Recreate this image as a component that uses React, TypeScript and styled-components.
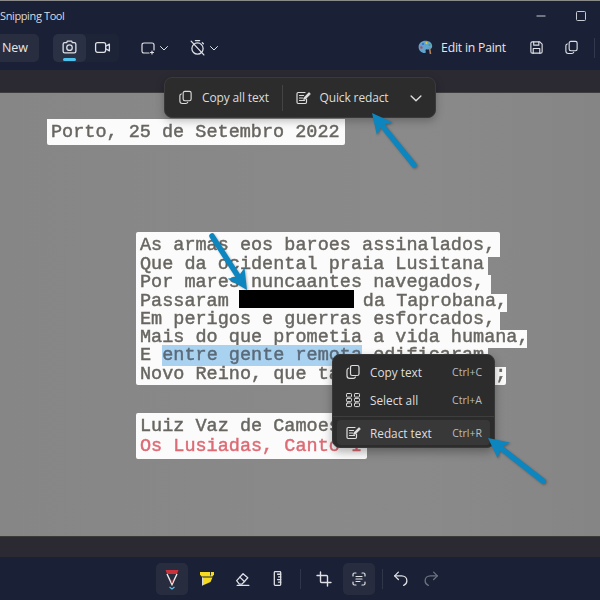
import React from "react";
import styled, { createGlobalStyle } from "styled-components";

const Global = createGlobalStyle`
  html, body { margin: 0; padding: 0; width: 600px; height: 600px; overflow: hidden; background: #1a2035; }
  #root { width: 600px; height: 600px; }
  * { box-sizing: border-box; }
`;

const UI = `"Open Sans", "Noto Sans", sans-serif`;

const Shell = styled.div`
  position: relative;
  width: 600px;
  height: 600px;
  display: flex;
  flex-direction: column;
  overflow: hidden;
  font-family: ${UI};
  color: #e6e6e6;
  background: #1a2035;
  border-top: 1px solid #8a8a8a;
`;
const TitleBar = styled.div`
  height: 29px;
  flex: none;
  display: flex;
  align-items: center;
  justify-content: space-between;
  font-size: 11px;
  letter-spacing: -0.38px;
`;
const Title = styled.span`
  color: #d8dae0;
`;
const WindowButtons = styled.div`
  display: flex;
  align-items: center;
  gap: 30px;
  margin-right: 14px;
  color: #c8cbd2;
`;
const Toolbar = styled.div`
  height: 40px;
  flex: none;
  display: flex;
  align-items: center;
  padding-bottom: 5px;
`;
const NewButton = styled.div`
  width: 39px;
  height: 28px;
  border-radius: 0 5px 5px 0;
  background: #282e40;
  font-size: 12.5px;
  font-weight: 500;
  display: flex;
  align-items: center;
  justify-content: flex-end;
  padding-right: 11px;
  margin-right: 14px;
`;
const Segment = styled.div`
  width: 66px;
  height: 28px;
  display: flex;
  background: #1e2438;
  border-radius: 5px;
  margin-right: 21px;
`;
const SegItem = styled.div<{ $active?: boolean }>`
  position: relative;
  width: 33px;
  display: flex;
  align-items: center;
  justify-content: center;
  border-radius: 5px;
  background: ${(p) => (p.$active ? "#2b3144" : "transparent")};
  color: #dfe1e6;
  &::after {
    content: "";
    display: ${(p) => (p.$active ? "block" : "none")};
    position: absolute;
    left: 10px;
    right: 10px;
    bottom: 1px;
    height: 2.5px;
    border-radius: 2px;
    background: #4cc2ec;
  }
`;
const Dropdown = styled.div<{ $gap: number }>`
  display: flex;
  align-items: center;
  gap: 3px;
  margin-right: ${(p) => p.$gap}px;
  color: #dfe1e6;
`;
const Spacer = styled.div`
  flex: 1;
`;
const PaintButton = styled.div`
  display: flex;
  align-items: center;
  gap: 8px;
  font-size: 12.2px;
  letter-spacing: -0.2px;
  margin-right: 23px;
`;
const ToolIcon = styled.div<{ $mr: number }>`
  display: flex;
  margin-right: ${(p) => p.$mr}px;
  color: #dfe1e6;
`;
const VSep = styled.div`
  width: 1px;
  height: 20px;
  background: #33394c;
`;
const EndGap = styled.div`
  width: 5px;
`;
const Band = styled.div<{ $h: number }>`
  height: ${(p) => p.$h}px;
  flex: none;
  background: #2b2a33;
`;
const Canvas = styled.div`
  position: relative;
  flex: 1;
  background: linear-gradient(90deg, #868686, #8a8a8a 70%, #858585);
  border-top: 1px solid #3d3d3d;
  border-bottom: 1px solid #3a3a3a;
`;
const Doc = styled.div<{ $x: number; $y: number }>`
  position: absolute;
  left: ${(p) => p.$x}px;
  top: ${(p) => p.$y}px;
  display: flex;
  flex-direction: column;
  align-items: flex-start;
`;
const Line = styled.div<{ $w: number; $h: number; $lh: number; $red?: boolean }>`
  width: ${(p) => p.$w}px;
  height: ${(p) => p.$h}px;
  padding-left: 4px;
  background: #fbfbfb;
  font-family: "Liberation Mono", "DejaVu Sans Mono", monospace;
  font-size: 18.5px;
  line-height: ${(p) => p.$lh}px;
  white-space: pre;
  color: ${(p) => (p.$red ? "#dd6a74" : "#686661")};
  -webkit-text-stroke: 0.45px currentColor;
  &:first-child { border-radius: 2px 2px 0 0; }
  &:last-child { border-radius: 0 0 2px 2px; }
`;
const Ink = styled.span`
  display: inline-block;
  height: 100%;
  filter: blur(0.5px);
`;
const Redaction = styled.span`
  display: inline-block;
  width: 115px;
  height: 18px;
  margin: -8px 9px -4px 10px;
  background: #000;
  vertical-align: 2px;
`;
const Selected = styled.span`
  background: #a9d2f1;
  color: #5b6a78;
`;
const Popup = styled.div`
  position: absolute;
  left: 164px;
  top: 76px;
  width: 272px;
  height: 41px;
  display: flex;
  align-items: center;
  background: #2c2c2c;
  border: 1px solid #3a3a3a;
  border-radius: 8px;
  font-size: 12px;
  letter-spacing: -0.14px;
  color: #dcdcdc;
  box-shadow: 0 3px 8px rgba(0, 0, 0, 0.25);
`;
const PopupItem = styled.div<{ $w: number; $pl: number }>`
  width: ${(p) => p.$w}px;
  display: flex;
  align-items: center;
  gap: 9px;
  padding-left: ${(p) => p.$pl}px;
`;
const PopupSep = styled.div`
  width: 1px;
  height: 26px;
  background: #444;
`;
const Menu = styled.div`
  position: absolute;
  left: 332px;
  top: 353px;
  width: 163px;
  height: 94px;
  padding: 3px 4px;
  background: #2c2c2c;
  border: 1px solid #383838;
  border-radius: 8px;
  font-size: 11.8px;
  color: #dedede;
  box-shadow: 0 4px 10px rgba(0, 0, 0, 0.3);
  display: flex;
  flex-direction: column;
`;
const MenuItem = styled.div<{ $active?: boolean; $h: number }>`
  height: ${(p) => p.$h}px;
  flex: none;
  display: flex;
  align-items: center;
  gap: 9px;
  padding: 0 8px;
  border-radius: 4px;
  background: ${(p) => (p.$active ? "#383838" : "transparent")};
`;
const Shortcut = styled.span`
  margin-left: auto;
  font-size: 10.5px;
  color: #bdbdbd;
`;
const MenuDivider = styled.div`
  height: 1px;
  margin: 2px -4px 3px;
  background: #3e3e3e;
  flex: none;
`;
const ArrowLayer = styled.svg`
  position: absolute;
  left: 0;
  top: 0;
  width: 600px;
  height: 600px;
  pointer-events: none;
  filter: drop-shadow(1px 1px 1px rgba(0, 0, 0, 0.3));
`;
const BottomBar = styled.div`
  height: 43px;
  flex: none;
  display: flex;
  align-items: center;
  padding-left: 156px;
`;
const BottomBtn = styled.div<{ $active?: boolean; $mr?: number }>`
  width: 32px;
  height: 32px;
  flex: none;
  margin-right: ${(p) => p.$mr ?? 3}px;
  display: flex;
  align-items: center;
  justify-content: center;
  border-radius: 5px;
  color: #dfe1e6;
  background: ${(p) => (p.$active ? "#272d3f" : "transparent")};
`;
const BottomSep = styled.div<{ $mr: number }>`
  width: 1px;
  height: 20px;
  flex: none;
  background: #30364a;
  margin-right: ${(p) => p.$mr}px;
`;

type IP = { size?: number; children: React.ReactNode; sw?: number; color?: string };
const Ic = ({ size = 16, sw = 1.2, color, children }: IP) => (
  <svg width={size} height={size} viewBox="0 0 16 16" fill="none" stroke={color ?? "currentColor"} strokeWidth={sw} strokeLinecap="round" strokeLinejoin="round">
    {children}
  </svg>
);
const Chevron = ({ size = 10 }: { size?: number }) => (
  <svg width={size} height={size} viewBox="0 0 10 10" fill="none" stroke="currentColor" strokeWidth="1" strokeLinecap="round" strokeLinejoin="round">
    <path d="M1.5 3.5 5 7l3.5-3.5" />
  </svg>
);
const CopyIcon = ({ size = 15 }: { size?: number }) => (
  <Ic size={size}>
    <rect x="5.5" y="1.5" width="8.5" height="10" rx="1.8" />
    <path d="M3.5 4.2C2.5 4.5 2 5.2 2 6.2v5.6c0 1.5 1 2.6 2.6 2.6h3.8c1 0 1.7-.5 2-1.4" />
  </Ic>
);
const RedactIcon = () => (
  <Ic size={16}>
    <path d="M11.5 9v3.3c0 .7-.5 1.2-1.200 1.200H3.200c-.7 0-1.200-.5-1.200-1.200V3.700c0-.7.5-1.200 1.200-1.200H10" />
    <path d="M4.500 5.500h4M4.500 8h3M4.500 10.500h5" />
    <path d="M9.200 7.800 14 3l1 1-4.800 4.800-1.400.4z" fill="currentColor" stroke="currentColor" />
  </Ic>
);
const SelectAllIcon = () => (
  <Ic size={16} sw={1}>
    <rect x="1.500" y="1.500" width="5" height="3.600" rx=".8" />
    <rect x="9.500" y="1.500" width="5" height="3.600" rx=".8" />
    <rect x="1.500" y="6.400" width="5" height="3.200" rx=".8" />
    <rect x="9.500" y="6.400" width="5" height="3.200" rx=".8" />
    <rect x="1.500" y="11" width="5" height="3.600" rx=".8" />
    <rect x="9.500" y="11" width="5" height="3.600" rx=".8" />
  </Ic>
);

const Arrow = ({ x1, y1, x2, y2, head = 20 }: { x1: number; y1: number; x2: number; y2: number; head?: number }) => {
  const a = Math.atan2(y2 - y1, x2 - x1);
  const p = (d: number, s: number) => {
    const bx = x2 - Math.cos(a) * d;
    const by = y2 - Math.sin(a) * d;
    return `${bx - Math.sin(a) * s},${by + Math.cos(a) * s}`;
  };
  const mx = x2 - Math.cos(a) * (head - 6);
  const my = y2 - Math.sin(a) * (head - 6);
  return (
    <g>
      <line x1={x1} y1={y1} x2={mx} y2={my} stroke="#0d85bf" strokeWidth="5.5" strokeLinecap="round" />
      <polygon points={`${x2},${y2} ${p(head, 10)} ${p(head - 4, 0)} ${p(head, -10)}`} fill="#0d85bf" />
    </g>
  );
};

const Palette = () => (
  <svg width="15" height="15" viewBox="0 0 15 15">
    <path d="M7.500.8C3.600.8.600 3.500.600 7c0 3.400 2.800 6 6 6 1.400 0 1.500-1 1-2-.4-1 .3-1.800 1.400-1.600 2.700.5 5.200-.6 5.200-3.200C14.200 3 11.400.8 7.500.8z" fill="#5fa3cf" />
    <circle cx="3.400" cy="7.500" r="1.200" fill="#e23b3b" />
    <circle cx="5" cy="4" r="1.100" fill="#2f6fd0" />
    <circle cx="8.500" cy="3" r="1.100" fill="#f2c72c" />
    <circle cx="11.500" cy="5" r="1" fill="#3aa655" />
    <path d="M11.500 7.500 12.500 14" stroke="#b58357" strokeWidth="1.600" />
  </svg>
);

const lines1: [number, React.ReactNode][] = [
  [364, "As armas eos baroes assinalados,"],
  [352, "Que da ocidental praia Lusitana"],
  [355, "Por mares nuncaantes navegados,"],
  [371, <>Passaram<Redaction />da Taprobana,</>],
  [364, "Em perigos e guerras esforcados,"],
  [391, "Mais do que prometia a vida humana,"],
  [352, <>E <Selected>entre gente remota</Selected> edificaram</>],
  [370, "Novo Reino, que tanto sublimaram;"],
];

export default function App() {
  return (
    <Shell>
      <Global />
      <TitleBar>
        <Title>Snipping Tool</Title>
        <WindowButtons>
          <svg width="10" height="10" viewBox="0 0 10 10"><path d="M.5 5h9" stroke="currentColor" /></svg>
          <svg width="10" height="10" viewBox="0 0 10 10" fill="none"><rect x=".5" y=".5" width="9" height="9" rx="1" stroke="currentColor" /></svg>
        </WindowButtons>
      </TitleBar>
      <Toolbar>
        <NewButton>New</NewButton>
        <Segment>
          <SegItem $active>
            <Ic size={17}>
              <path d="M5.300 3.500 6 2h4l.7 1.500h1.800c.9 0 1.500.6 1.500 1.500v6.500c0 .9-.6 1.500-1.500 1.500h-9C2.600 13 2 12.400 2 11.500V5c0-.9.6-1.500 1.500-1.500z" />
              <circle cx="8" cy="8.200" r="2.600" />
            </Ic>
          </SegItem>
          <SegItem>
            <Ic size={17}>
              <rect x="1.500" y="3.500" width="9.500" height="9" rx="1.800" />
              <path d="m11 6.800 3.500-2v6.400L11 9.200" />
            </Ic>
          </SegItem>
        </Segment>
        <Dropdown $gap={20}>
          <Ic size={16}>
            <path d="M9 13H4c-1.300 0-2-.7-2-2V5c0-1.300.7-2 2-2h8c1.300 0 2 .7 2 2v5" />
            <path d="M12 11v3M10.500 12.500h3" />
          </Ic>
          <Chevron />
        </Dropdown>
        <Dropdown $gap={0}>
          <Ic size={17}>
            <circle cx="8" cy="9" r="5.300" />
            <path d="M2 2l12 13M6 1.500h4M12.500 3.500l1 1" />
          </Ic>
          <Chevron />
        </Dropdown>
        <Spacer />
        <PaintButton><Palette />Edit in Paint</PaintButton>
        <ToolIcon $mr={20}>
          <Ic size={15}>
            <path d="M2 3.500C2 2.600 2.600 2 3.500 2h8L14 4.500v8c0 .9-.6 1.500-1.500 1.500h-9C2.600 14 2 13.400 2 12.500z" />
            <path d="M5 2v3.500h5.500V2M4.500 14V9h7v5" />
          </Ic>
        </ToolIcon>
        <ToolIcon $mr={15}><CopyIcon /></ToolIcon>
        <VSep />
        <EndGap />
      </Toolbar>
      <Band $h={22} />
      <Canvas>
        <Doc $x={47} $y={26}>
          <Line $w={298} $h={26} $lh={28}>
            <Ink>Porto, 25 de Setembro 2022</Ink>
          </Line>
        </Doc>
        <Doc $x={136} $y={139}>
          {lines1.map(([w, t], i) => (
            <Line key={i} $w={w} $h={i === 0 ? 25 : 18.3} $lh={i === 0 ? 28 : 15}>
              <Ink>{t}</Ink>
            </Line>
          ))}
        </Doc>
        <Doc $x={136} $y={320}>
          <Line $w={224} $h={24} $lh={28}><Ink>Luiz Vaz de Camoes</Ink></Line>
          <Line $w={231} $h={22} $lh={20} $red><Ink>Os Lusiadas, Canto I</Ink></Line>
        </Doc>
      </Canvas>
      <Band $h={20} />
      <BottomBar>
        <BottomBtn $active>
          <svg width="18" height="24" viewBox="0 0 18 24" fill="none">
            <path d="M2.500 3h13l-1.500 4H4z" fill="#c8323a" />
            <path d="M4 7 9 17.500 14 7" stroke="#ececec" strokeWidth="1.400" />
            <path d="M7.500 13.500 9 16.500l1.500-3z" fill="#c8323a" />
            <path d="M6.500 20 9 22l2.500-2" stroke="#64bde6" strokeWidth="1.200" />
          </svg>
        </BottomBtn>
        <BottomBtn>
          <svg width="18" height="18" viewBox="0 0 18 18" fill="none">
            <path d="M2 2h14v2.600l-1.500 2H3.500L2 4.600z" fill="#f5dc22" />
            <path d="M4 7.500h10.500L12.500 12 4.500 15.500z" fill="#f5dc22" />
            <path d="M4.500 7.500v8" stroke="#d9d9d9" strokeWidth="1" />
            <path d="M12.500 2v3.500" stroke="#3a3a2a" strokeWidth="1" />
          </svg>
        </BottomBtn>
        <BottomBtn>
          <Ic size={17}>
            <path d="M2.500 10 8.500 3.500l4.500 3.800-5.500 6H5z" />
            <path d="M5.500 6.700 10 11" />
            <path d="M3 14.500h11" />
          </Ic>
        </BottomBtn>
        <BottomBtn $mr={7}>
          <Ic size={17}>
            <rect x="5" y="1.500" width="6" height="13" rx=".8" />
            <path d="M8 4h3M9 6.500h2M8 9h3M9 11.500h2" />
          </Ic>
        </BottomBtn>
        <BottomSep $mr={7} />
        <BottomBtn>
          <Ic size={16} sw={1.400}>
            <path d="M4.500 1v9.500c0 .6.400 1 1 1H15M1 4.500h9.500c.6 0 1 .4 1 1V15" />
          </Ic>
        </BottomBtn>
        <BottomBtn $active $mr={7}>
          <Ic size={16}>
            <path d="M2 5V3.500C2 2.600 2.600 2 3.500 2H5M11 2h1.500c.9 0 1.500.6 1.500 1.500V5M14 11v1.500c0 .9-.6 1.500-1.500 1.500H11M5 14H3.500C2.600 14 2 13.400 2 12.500V11" />
            <path d="M5 5.500h6M5 8h6M5 10.500h4" />
          </Ic>
        </BottomBtn>
        <BottomSep $mr={1} />
        <BottomBtn $mr={-1}>
          <Ic size={17}>
            <path d="M6 2 2.500 5.500 6 9" />
            <path d="M2.500 5.500H9c3 0 5 2 5 4.500 0 2-1 3.500-3 4.500" />
          </Ic>
        </BottomBtn>
        <BottomBtn>
          <Ic size={17} color="#6f7380">
            <path d="M10 2l3.500 3.500L10 9" />
            <path d="M13.500 5.500H7c-3 0-5 2-5 4.500 0 2 1 3.500 3 4.500" />
          </Ic>
        </BottomBtn>
      </BottomBar>
      <Popup>
        <PopupItem $w={117} $pl={13}><CopyIcon size={15} />Copy all text</PopupItem>
        <PopupSep />
        <PopupItem $w={117} $pl={12}><RedactIcon />Quick redact</PopupItem>
        <PopupItem $w={36} $pl={10}><Chevron size={14} /></PopupItem>
      </Popup>
      <Menu>
        <MenuItem $h={28}><CopyIcon size={16} />Copy text<Shortcut>Ctrl+C</Shortcut></MenuItem>
        <MenuItem $h={28}><SelectAllIcon />Select all<Shortcut>Ctrl+A</Shortcut></MenuItem>
        <MenuDivider />
        <MenuItem $h={25} $active><RedactIcon />Redact text<Shortcut>Ctrl+R</Shortcut></MenuItem>
      </Menu>
      <ArrowLayer viewBox="0 0 600 600">
        <Arrow x1={414} y1={164} x2={372} y2={112} />
        <Arrow x1={212} y1={235} x2={247} y2={289} />
        <Arrow x1={543} y1={480} x2={488} y2={437} />
      </ArrowLayer>
    </Shell>
  );
}
